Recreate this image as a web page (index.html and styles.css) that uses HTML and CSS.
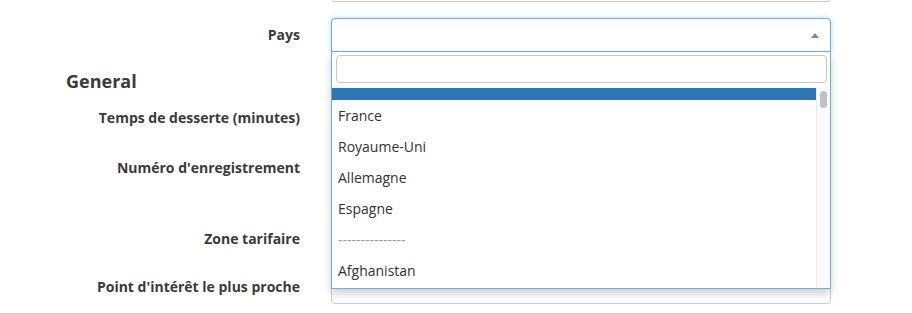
FILE: index.html
```html
<!DOCTYPE html>
<html lang="fr">
<head>
    <meta charset="UTF-8">
    <meta name="viewport" content="width=device-width, initial-scale=1.0">
    <title>Fiche établissement</title>
    <link rel="stylesheet" href="styles.css">
</head>
<body>
    <form class="form">
        <div class="row">
            <label class="label"></label>
            <div class="field"><input type="text" class="input"></div>
        </div>
        <div class="row">
            <label class="label">Pays</label>
            <div class="field">
                <!--Liste déroulante ouverte-->
                <div class="select open"><span class="arrow"></span></div>
                <div class="dropdown">
                    <div class="search"><input type="text" class="search-input"></div>
                    <div class="results">
                        <ul class="options">
                            <li class="option highlighted">&nbsp;</li>
                            <li class="option">France</li>
                            <li class="option">Royaume-Uni</li>
                            <li class="option">Allemagne</li>
                            <li class="option">Espagne</li>
                            <li class="option disabled">---------------</li>
                            <li class="option">Afghanistan</li>
                        </ul>
                        <div class="scrollbar"><div class="thumb"></div></div>
                    </div>
                </div>
            </div>
        </div>
        <h3 class="section">General</h3>
        <div class="row">
            <label class="label">Temps de desserte (minutes)</label>
            <div class="field"><input type="number" class="input"></div>
        </div>
        <div class="row row-help">
            <label class="label">Numéro d'enregistrement</label>
            <div class="field"><input type="text" class="input"></div>
        </div>
        <div class="row row-tight">
            <label class="label">Zone tarifaire</label>
            <div class="field"><input type="text" class="input"></div>
        </div>
        <div class="row">
            <label class="label">Point d'intérêt le plus proche</label>
            <div class="field"><input type="text" class="input"></div>
        </div>
    </form>
</body>
</html>
```

FILE: styles.css
```css
body {
    margin: 0;
    font-family: "Open Sans", "Liberation Sans", sans-serif;
    font-size: 14px;
    color: #333;
    background: #fff;
}
.form {
    margin-top: -32px;
}
.row {
    display: flex;
    align-items: flex-start;
    margin-bottom: 16px;
}
.row-help {
    margin-bottom: 37px;
}
.row-tight {
    margin-bottom: 14px;
}
.label {
    width: 300px;
    padding-top: 7px;
    line-height: 20px;
    text-align: right;
    font-weight: 700;
    color: #3a3a3a;
}
.field {
    position: relative;
    width: 500px;
    margin-left: 31px;
}
.input {
    display: block;
    box-sizing: border-box;
    width: 100%;
    height: 34px;
    border: 1px solid #ccc;
    border-radius: 4px;
    background: #fff;
}
.section {
    margin: 18px 0 9px 66px;
    font-size: 18px;
    line-height: 22px;
    font-weight: 700;
    color: #3a3a3a;
}
.select {
    position: relative;
    box-sizing: border-box;
    height: 34px;
    border: 1px solid #66afe9;
    border-radius: 4px;
    background: #fff;
    box-shadow: 0 0 5px rgba(102, 175, 233, .5);
}
.select.open {
    border-bottom-left-radius: 0;
    border-bottom-right-radius: 0;
}
.arrow {
    position: absolute;
    top: 14px;
    right: 11px;
    width: 0;
    height: 0;
    border-style: solid;
    border-width: 0 4px 5px 4px;
    border-color: transparent transparent #888 transparent;
}
.dropdown {
    position: absolute;
    top: 34px;
    left: 0;
    right: 0;
    z-index: 10;
    box-sizing: border-box;
    border: 1px solid #66afe9;
    border-top: none;
    background: #fff;
    box-shadow: 0 5px 8px rgba(0, 0, 0, .18);
}
.search {
    padding: 3px 3px 5px 4px;
    background: #fff;
}
.search-input {
    display: block;
    box-sizing: border-box;
    width: 100%;
    height: 28px;
    border: 1px solid #c8c8c8;
    border-radius: 4px;
}
.results {
    display: flex;
    height: 200px;
    overflow: hidden;
}
.options {
    flex: 1;
    margin: 0;
    padding: 0;
    list-style: none;
}
.option {
    padding: 6px;
    line-height: 19px;
    color: #333;
}
.highlighted {
    margin-top: -19px;
    background: #2d76b8;
}
.disabled {
    color: #999;
}
.scrollbar {
    width: 13px;
    border-left: 1px solid #ececec;
    background: #fafafa;
}
.thumb {
    width: 7px;
    height: 17px;
    margin: 3px 0 0 3px;
    border-radius: 4px;
    background: #c1c1c1;
}
```
